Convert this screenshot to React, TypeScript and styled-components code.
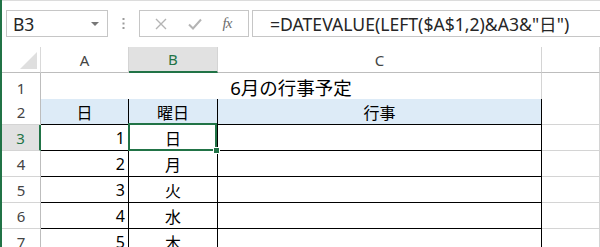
import React from 'react';
import styled, { createGlobalStyle } from 'styled-components';

const GlobalStyle = createGlobalStyle`
    html, body {
        margin: 0;
        padding: 0;
        background: #ffffff;
    }
    body {
        font-family: "Noto Sans", "Noto Sans CJK JP", sans-serif;
    }
`;

const EXCEL_GREEN = '#217346';
const GRID = '#d4d4d4';

const Window = styled.div`
    width: 600px;
    height: 247px;
    overflow: hidden;
    box-sizing: border-box;
    border-left: 2px solid ${EXCEL_GREEN};
    display: flex;
    flex-direction: column;
    background: #ffffff;
`;

const TopRule = styled.div`
    height: 2px;
    border-bottom: 1px solid #dcdcdc;
`;

const FormulaBar = styled.div`
    display: flex;
    align-items: stretch;
    height: 32px;
    margin: 9px -20px 10px 4px;
`;

const NameBox = styled.div`
    width: 102px;
    box-sizing: border-box;
    border: 1px solid #c6c6c6;
    display: flex;
    align-items: center;
    justify-content: space-between;
    padding: 0 6px 0 6px;
    font-family: "Noto Sans", sans-serif;
    font-size: 17.5px;
    color: #262626;
`;

const DropArrow = styled.span`
    width: 0;
    height: 0;
    border-left: 4px solid transparent;
    border-right: 4px solid transparent;
    border-top: 4px solid #777777;
    margin-right: 2px;
`;

const Grip = styled.div`
    width: 31px;
    display: flex;
    align-items: center;
    justify-content: center;
`;

const FxBox = styled.div`
    width: 110px;
    box-sizing: border-box;
    border: 1px solid #c6c6c6;
    display: flex;
    align-items: center;
    justify-content: space-around;
    padding: 0 6px 0 4px;
`;

const FxLabel = styled.span`
    font-family: "Liberation Serif", serif;
    font-style: italic;
    font-size: 15px;
    color: #6d6d6d;
    letter-spacing: -1px;
`;

const FormulaBox = styled.div`
    flex: 1;
    margin-left: 3px;
    box-sizing: border-box;
    border: 1px solid #c6c6c6;
    display: flex;
    align-items: center;
    padding-left: 17px;
    font-family: "Noto Sans", "Noto Sans CJK JP", sans-serif;
    font-size: 17.6px;
    color: #262626;
    white-space: nowrap;
`;

const Sheet = styled.div`
    display: grid;
    grid-template-columns: 39px 88px 89px 324px 1fr;
    grid-auto-rows: 26px;
`;

const ColHead = styled.div<{ $selected?: boolean }>`
    box-sizing: border-box;
    display: flex;
    align-items: center;
    justify-content: center;
    font-family: "Noto Sans", sans-serif;
    font-size: 15px;
    color: ${(p) => (p.$selected ? EXCEL_GREEN : '#444444')};
    background: ${(p) => (p.$selected ? '#e1e1e1' : '#ffffff')};
    border-right: 1px solid ${GRID};
    border-bottom: ${(p) => (p.$selected ? `2px solid ${EXCEL_GREEN}` : '1px solid #bdbdbd')};
`;

const Corner = styled(ColHead)`
    position: relative;
    border-right: 1px solid #d9d9d9;
    svg {
        position: absolute;
        right: 3px;
        bottom: 3px;
    }
`;

const RowHead = styled.div<{ $selected?: boolean; $tall?: boolean }>`
    box-sizing: border-box;
    height: ${(p) => (p.$tall ? '30px' : '26px')};
    display: flex;
    align-items: center;
    justify-content: center;
    font-family: "Noto Sans", sans-serif;
    font-size: 15px;
    color: ${(p) => (p.$selected ? EXCEL_GREEN : '#444444')};
    background: ${(p) => (p.$selected ? '#e1e1e1' : '#ffffff')};
    border-right: ${(p) => (p.$selected ? `2px solid ${EXCEL_GREEN}` : '1px solid #bdbdbd')};
    border-bottom: 1px solid ${GRID};
`;

const Cell = styled.div<{
    $align?: 'left' | 'center' | 'right';
    $fill?: string;
    $ruled?: boolean;
    $span?: number;
    $tall?: boolean;
}>`
    position: relative;
    box-sizing: border-box;
    height: ${(p) => (p.$tall ? '30px' : '26px')};
    grid-column: span ${(p) => p.$span ?? 1};
    display: flex;
    align-items: center;
    justify-content: ${(p) =>
        p.$align === 'right' ? 'flex-end' : p.$align === 'center' ? 'center' : 'flex-start'};
    padding: 0 3px;
    font-family: "Noto Sans", "Noto Sans CJK JP", sans-serif;
    font-size: 16px;
    color: #000000;
    background: ${(p) => p.$fill ?? '#ffffff'};
    border-right: 1px solid ${(p) => (p.$ruled ? '#000000' : GRID)};
    border-bottom: 1px solid ${(p) => (p.$ruled ? '#000000' : GRID)};
`;

const Title = styled(Cell)`
    font-size: 18.5px;
    padding-bottom: 2px;
    border-bottom-color: #000000;
`;

const Selection = styled.div`
    position: absolute;
    top: -2px;
    left: -1px;
    right: 0;
    bottom: -1px;
    border: 2px solid ${EXCEL_GREEN};
    pointer-events: none;
    z-index: 2;
`;

const FillHandle = styled.div`
    position: absolute;
    right: -5px;
    bottom: -5px;
    width: 5px;
    height: 5px;
    background: ${EXCEL_GREEN};
    border: 1px solid #ffffff;
`;

const days = [
    { n: 1, d: '日' },
    { n: 2, d: '月' },
    { n: 3, d: '火' },
    { n: 4, d: '水' },
    { n: 5, d: '木' },
];

const columns = ['A', 'B', 'C', ''];

export default function App() {
    return (
        <>
            <GlobalStyle />
            <Window>
                <TopRule />

                {/* Name box + formula bar */}
                <FormulaBar>
                    <NameBox>
                        B3
                        <DropArrow />
                    </NameBox>
                    <Grip>
                        <svg width="3" height="11" viewBox="0 0 3 11">
                            <rect x="0.5" y="0" width="2" height="2" fill="#9b9b9b" />
                            <rect x="0.5" y="4.5" width="2" height="2" fill="#9b9b9b" />
                            <rect x="0.5" y="9" width="2" height="2" fill="#9b9b9b" />
                        </svg>
                    </Grip>
                    <FxBox>
                        <svg width="12" height="12" viewBox="0 0 12 12">
                            <path d="M1 1 L11 11 M11 1 L1 11" stroke="#b4b4b4" strokeWidth="1.4" />
                        </svg>
                        <svg width="14" height="12" viewBox="0 0 14 12">
                            <path d="M1 6.5 L5 10.5 L13 1.5" stroke="#b4b4b4" strokeWidth="2" fill="none" />
                        </svg>
                        <FxLabel>fx</FxLabel>
                    </FxBox>
                    <FormulaBox>=DATEVALUE(LEFT($A$1,2)&amp;A3&amp;"日")</FormulaBox>
                </FormulaBar>

                {/* Worksheet grid */}
                <Sheet>
                    <Corner>
                        <svg width="17" height="17" viewBox="0 0 17 17">
                            <polygon points="17,0 17,17 0,17" fill="#dfdfdf" />
                        </svg>
                    </Corner>
                    {columns.map((c) => (
                        <ColHead key={c || 'D'} $selected={c === 'B'}>
                            {c}
                        </ColHead>
                    ))}

                    <RowHead $tall>1</RowHead>
                    <Title $span={3} $align="center" $tall>
                        6月の行事予定
                    </Title>
                    <Cell $tall />

                    <RowHead>2</RowHead>
                    <Cell $ruled $align="center" $fill="#ddebf7">日</Cell>
                    <Cell $ruled $align="center" $fill="#ddebf7">曜日</Cell>
                    <Cell $ruled $align="center" $fill="#ddebf7">行事</Cell>
                    <Cell />

                    {days.map((row, i) => (
                        <React.Fragment key={row.n}>
                            <RowHead $selected={i === 0}>{i + 3}</RowHead>
                            <Cell $ruled $align="right">{row.n}</Cell>
                            <Cell $ruled $align="center">
                                {row.d}
                                {i === 0 && (
                                    <Selection>
                                        <FillHandle />
                                    </Selection>
                                )}
                            </Cell>
                            <Cell $ruled />
                            <Cell />
                        </React.Fragment>
                    ))}
                </Sheet>
            </Window>
        </>
    );
}
